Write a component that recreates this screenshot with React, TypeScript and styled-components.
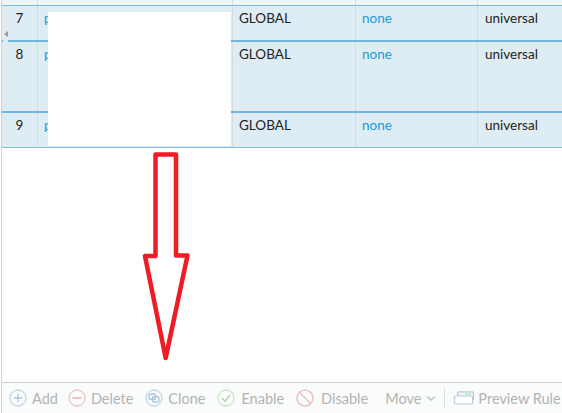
import React from 'react';
import styled, {createGlobalStyle} from 'styled-components';

const GlobalStyle = createGlobalStyle`
  html, body {
    margin: 0;
    padding: 0;
    background: #ffffff;
    overflow: hidden;
  }
`;

const Page = styled.div`
  position: relative;
  box-sizing: border-box;
  width: 561px;
  height: 413px;
  border-left: 1px solid #cfd3d4;
  margin-left: 1px;
  display: flex;
  flex-direction: column;
  font-family: Lato, 'Open Sans', sans-serif;
  font-size: 13.5px;
  color: #222222;
  background: #ffffff;
  overflow: hidden;
`;

const Columns = styled.div<{$height: number; $line: string; $bg: string}>`
  box-sizing: content-box;
  display: grid;
  grid-template-columns: 36px 195px 123px 122px 1fr;
  height: ${p => p.$height}px;
  background: ${p => p.$bg};
  border-bottom: ${p => p.$line};
`;

const Cell = styled.div<{$center?: boolean; $link?: boolean}>`
  box-sizing: border-box;
  padding: 4px ${p => (p.$center ? 0 : 6)}px 0;
  line-height: 16px;
  border-right: 1px solid #d5dbde;
  text-align: ${p => (p.$center ? 'center' : 'left')};
  color: ${p => (p.$link ? '#1a9ad6' : '#222222')};
  white-space: nowrap;
  overflow: hidden;

  &:last-child {
    border-right: none;
    padding-left: 7px;
  }
`;

const Spacer = styled.div`
  flex: 1;
`;

const Toolbar = styled.div`
  box-sizing: border-box;
  height: 31px;
  border-top: 1px solid #cdd0d0;
  background: #fafbfb;
  display: flex;
  align-items: center;
  padding-left: 7px;
  color: #b2b4b5;
  font-size: 14.5px;
  white-space: nowrap;
`;

const ToolButton = styled.div<{$gap: number; $after: number}>`
  display: flex;
  align-items: center;
  gap: ${p => p.$gap}px;
  margin-right: ${p => p.$after}px;
`;

const Divider = styled.div`
  width: 1px;
  height: 20px;
  background: #dcdfe0;
  margin: 0 9px 0 8px;
`;

const Redaction = styled.div`
  position: absolute;
  left: 46px;
  top: 12px;
  width: 183px;
  height: 134px;
  background: #ffffff;
`;

const CollapseHandle = styled.div`
  position: absolute;
  left: 1px;
  top: 12px;
  width: 5px;
  height: 43px;
  background: #e6eaec;
  display: flex;
  align-items: center;
  justify-content: center;

  &::before {
    content: '';
    border-top: 3px solid transparent;
    border-bottom: 3px solid transparent;
    border-right: 4px solid #9a9c9d;
  }
`;

const ArrowOverlay = styled.svg`
  position: absolute;
  left: -2px;
  top: 0;
  pointer-events: none;
`;

const rows = [
  {id: 7, height: 34, line: '2px solid #6fb6dc'},
  {id: 8, height: 69, line: '2px solid #6fb6dc'},
  {id: 9, height: 34, line: '1px solid #7dbde0'},
];

const AddIcon = () => (
  <svg width="18" height="18" viewBox="0 0 18 18" fill="none" stroke="#c3d6e6" strokeWidth="1.3">
    <circle cx="9" cy="9" r="8" />
    <path d="M9 5v8M5 9h8" stroke="#a9c6de" />
  </svg>
);

const DeleteIcon = () => (
  <svg width="18" height="18" viewBox="0 0 18 18" fill="none" stroke="#ecc6c6" strokeWidth="1.3">
    <circle cx="9" cy="9" r="8" />
    <path d="M4.5 9h9" stroke="#e3a9a9" />
  </svg>
);

const CloneIcon = () => (
  <svg width="18" height="18" viewBox="0 0 18 18" fill="none" stroke="#c3d6e6" strokeWidth="1.3">
    <circle cx="9" cy="9" r="8" />
    <rect x="4" y="5" width="6.5" height="5.5" rx="2" stroke="#a9c6de" />
    <rect x="7.5" y="7.5" width="6.5" height="5.5" rx="2" stroke="#a9c6de" />
  </svg>
);

const EnableIcon = () => (
  <svg width="18" height="18" viewBox="0 0 18 18" fill="none" stroke="#c8e4c3" strokeWidth="1.3">
    <circle cx="9" cy="9" r="8" />
    <path d="M5 9.2l3 3 5-6" stroke="#aed8a6" strokeWidth="1.5" />
  </svg>
);

const DisableIcon = () => (
  <svg width="18" height="18" viewBox="0 0 18 18" fill="none" stroke="#ecc6c6" strokeWidth="1.6">
    <circle cx="9" cy="9" r="8" />
    <path d="M3.5 3.5l11 11" />
  </svg>
);

const PreviewIcon = () => (
  <svg width="20" height="14" viewBox="0 0 20 14" fill="none" strokeWidth="1.2">
    <rect x="3.5" y="0.8" width="16" height="8" rx="1.5" stroke="#b5cbdd" fill="#eef3f6" />
    <rect x="0.6" y="5" width="18" height="8" rx="1.5" stroke="#b5cbdd" fill="#ffffff" />
    <path d="M12 3h1.5M15 3h1.5" stroke="#a8d6a0" strokeWidth="1.6" />
  </svg>
);

const ChevronIcon = () => (
  <svg width="10" height="7" viewBox="0 0 10 7" fill="none" stroke="#c2c4c5" strokeWidth="1.6">
    <path d="M1 1.5l4 3.5 4-3.5" />
  </svg>
);

const App = () => (
  <Page>
    <GlobalStyle />
    <Columns $height={5} $line="1px solid #7dbde0" $bg="#eff5f6">
      <Cell $center />
      <Cell />
      <Cell />
      <Cell />
      <Cell />
    </Columns>
    {rows.map(row => (
      <Columns key={row.id} $height={row.height} $line={row.line} $bg="#deecf4">
        <Cell $center>{row.id}</Cell>
        <Cell $link>p</Cell>
        <Cell>GLOBAL</Cell>
        <Cell $link>none</Cell>
        <Cell>universal</Cell>
      </Columns>
    ))}
    <Spacer />
    <Toolbar>
      <ToolButton $gap={5} $after={10}>
        <AddIcon />
        Add
      </ToolButton>
      <ToolButton $gap={5} $after={12}>
        <DeleteIcon />
        Delete
      </ToolButton>
      <ToolButton $gap={5} $after={12}>
        <CloneIcon />
        Clone
      </ToolButton>
      <ToolButton $gap={6} $after={12}>
        <EnableIcon />
        Enable
      </ToolButton>
      <ToolButton $gap={7} $after={17}>
        <DisableIcon />
        Disable
      </ToolButton>
      <ToolButton $gap={5} $after={0}>
        Move
        <ChevronIcon />
      </ToolButton>
      <Divider />
      <ToolButton $gap={4} $after={0}>
        <PreviewIcon />
        Preview Rule
      </ToolButton>
    </Toolbar>
    <Redaction />
    <CollapseHandle />
    <ArrowOverlay width="562" height="413" viewBox="0 0 562 413">
      <path
        d="M155.5 154.5H176V255.5H187.5L165.7 358L145 256H155.5Z"
        fill="none"
        stroke="#ee1c25"
        strokeWidth="4.5"
        strokeLinejoin="round"
      />
    </ArrowOverlay>
  </Page>
);

export default App;
